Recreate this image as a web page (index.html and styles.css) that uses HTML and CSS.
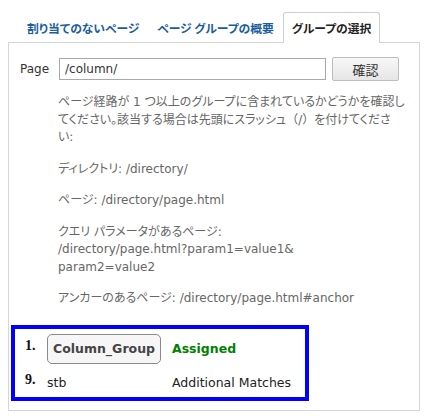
FILE: index.html
```html
<!DOCTYPE html>
<html lang="ja">
<head>
<meta charset="utf-8">
<title>グループの選択</title>
<link rel="stylesheet" href="styles.css">
</head>
<body>
<div class="tabs">
  <a class="tab">割り当てのないページ</a>
  <a class="tab">ページ グループの概要</a>
  <span class="tab active">グループの選択</span>
</div>
<div class="panel">
  <div class="page-row">
    <label class="page-label">Page</label>
    <input class="page-input" type="text" value="/column/">
    <button class="confirm">確認</button>
  </div>
  <div class="help">
    <p>ページ経路が 1 つ以上のグループに含まれているかどうかを確認し<br>てください。該当する場合は先頭にスラッシュ<span class="paren">（/）</span>を付けてくださ<br>い:</p>
    <p>ディレクトリ: /directory/</p>
    <p>ページ: /directory/page.html</p>
    <p>クエリ パラメータがあるページ:<br>/directory/page.html?param1=value1&amp;<br>param2=value2</p>
    <p>アンカーのあるページ: /directory/page.html#anchor</p>
  </div>
  <div class="results">
    <div class="result-row first">
      <span class="rank">1.</span>
      <span class="group"><span class="group-btn">Column_Group</span></span>
      <span class="status assigned">Assigned</span>
    </div>
    <div class="result-row second">
      <span class="rank">9.</span>
      <span class="group">stb</span>
      <span class="status">Additional Matches</span>
    </div>
  </div>
</div>
</body>
</html>
```
FILE: styles.css
```css
body {
  margin: 8px;
  background: #fff;
  font-family: "DejaVu Sans", "Noto Sans CJK JP", sans-serif;
  color: #333;
}
.tabs {
  display: flex;
  padding: 4px 0 0 10px;
  height: 30px;
}
.tab {
  display: block;
  box-sizing: border-box;
  height: 31px;
  padding: 0 8px;
  line-height: 29px;
  border: 1px solid transparent;
  border-bottom: none;
  font-family: "Noto Sans CJK JP", sans-serif;
  font-feature-settings: "palt";
  font-size: 11.8px;
  font-weight: bold;
  color: #1a5c9e;
  white-space: pre;
}
.tab.active {
  color: #222;
  background: #fff;
  border-color: #cfcfcf;
  border-radius: 3px 3px 0 0;
  position: relative;
  z-index: 1;
}
.panel {
  border: 1px solid #d6d6d6;
  padding: 14px 0 9px 0;
}
.page-row {
  display: flex;
  align-items: center;
  padding-left: 11px;
  height: 24px;
}
.page-label {
  width: 39px;
  font-size: 12px;
  color: #333;
}
.page-input {
  box-sizing: border-box;
  width: 267px;
  height: 22px;
  margin: 0;
  padding: 0 5px;
  border: 1px solid #a9a9a9;
  font-family: "DejaVu Sans", sans-serif;
  font-size: 12px;
  color: #333;
}
.confirm {
  box-sizing: border-box;
  width: 67px;
  height: 24px;
  margin: 0 0 0 6px;
  padding: 0;
  border: 1px solid #bdbdbd;
  border-radius: 2px;
  background: linear-gradient(#f7f7f7, #e6e6e6);
  font-family: "Noto Sans CJK JP", sans-serif;
  font-size: 13px;
  color: #333;
}
.help {
  margin: 13px 0 0 49px;
  width: 350px;
  font-size: 12px;
  line-height: 17.5px;
  color: #666;
  font-feature-settings: "palt";
}
.help p {
  margin: 0 0 14px 0;
}
.help p:last-child {
  margin-bottom: 0;
}
.paren {
  font-feature-settings: normal;
}
.results {
  margin: 17px 0 0 2px;
  width: 298px;
  box-sizing: border-box;
  border: 4px solid #0000ff;
}
.result-row {
  display: flex;
  align-items: center;
  font-size: 12.5px;
  color: #222;
}
.result-row.first {
  height: 40px;
}
.result-row.second {
  height: 28px;
}
.rank {
  box-sizing: border-box;
  width: 32px;
  padding-left: 10px;
  margin-bottom: 6px;
  font-family: "Liberation Serif", serif;
  font-weight: bold;
  font-size: 14px;
  color: #111;
}
.group {
  width: 125px;
}
.group-btn {
  display: inline-block;
  box-sizing: border-box;
  height: 30px;
  line-height: 28px;
  padding: 0 5px;
  border: 1px solid #8a8a8a;
  border-radius: 5px;
  background: #f6f6f6;
  font-weight: bold;
  font-size: 12.5px;
  color: #444;
}
.status {
  font-size: 12.5px;
}
.status.assigned {
  color: #008000;
  font-weight: bold;
}
```
